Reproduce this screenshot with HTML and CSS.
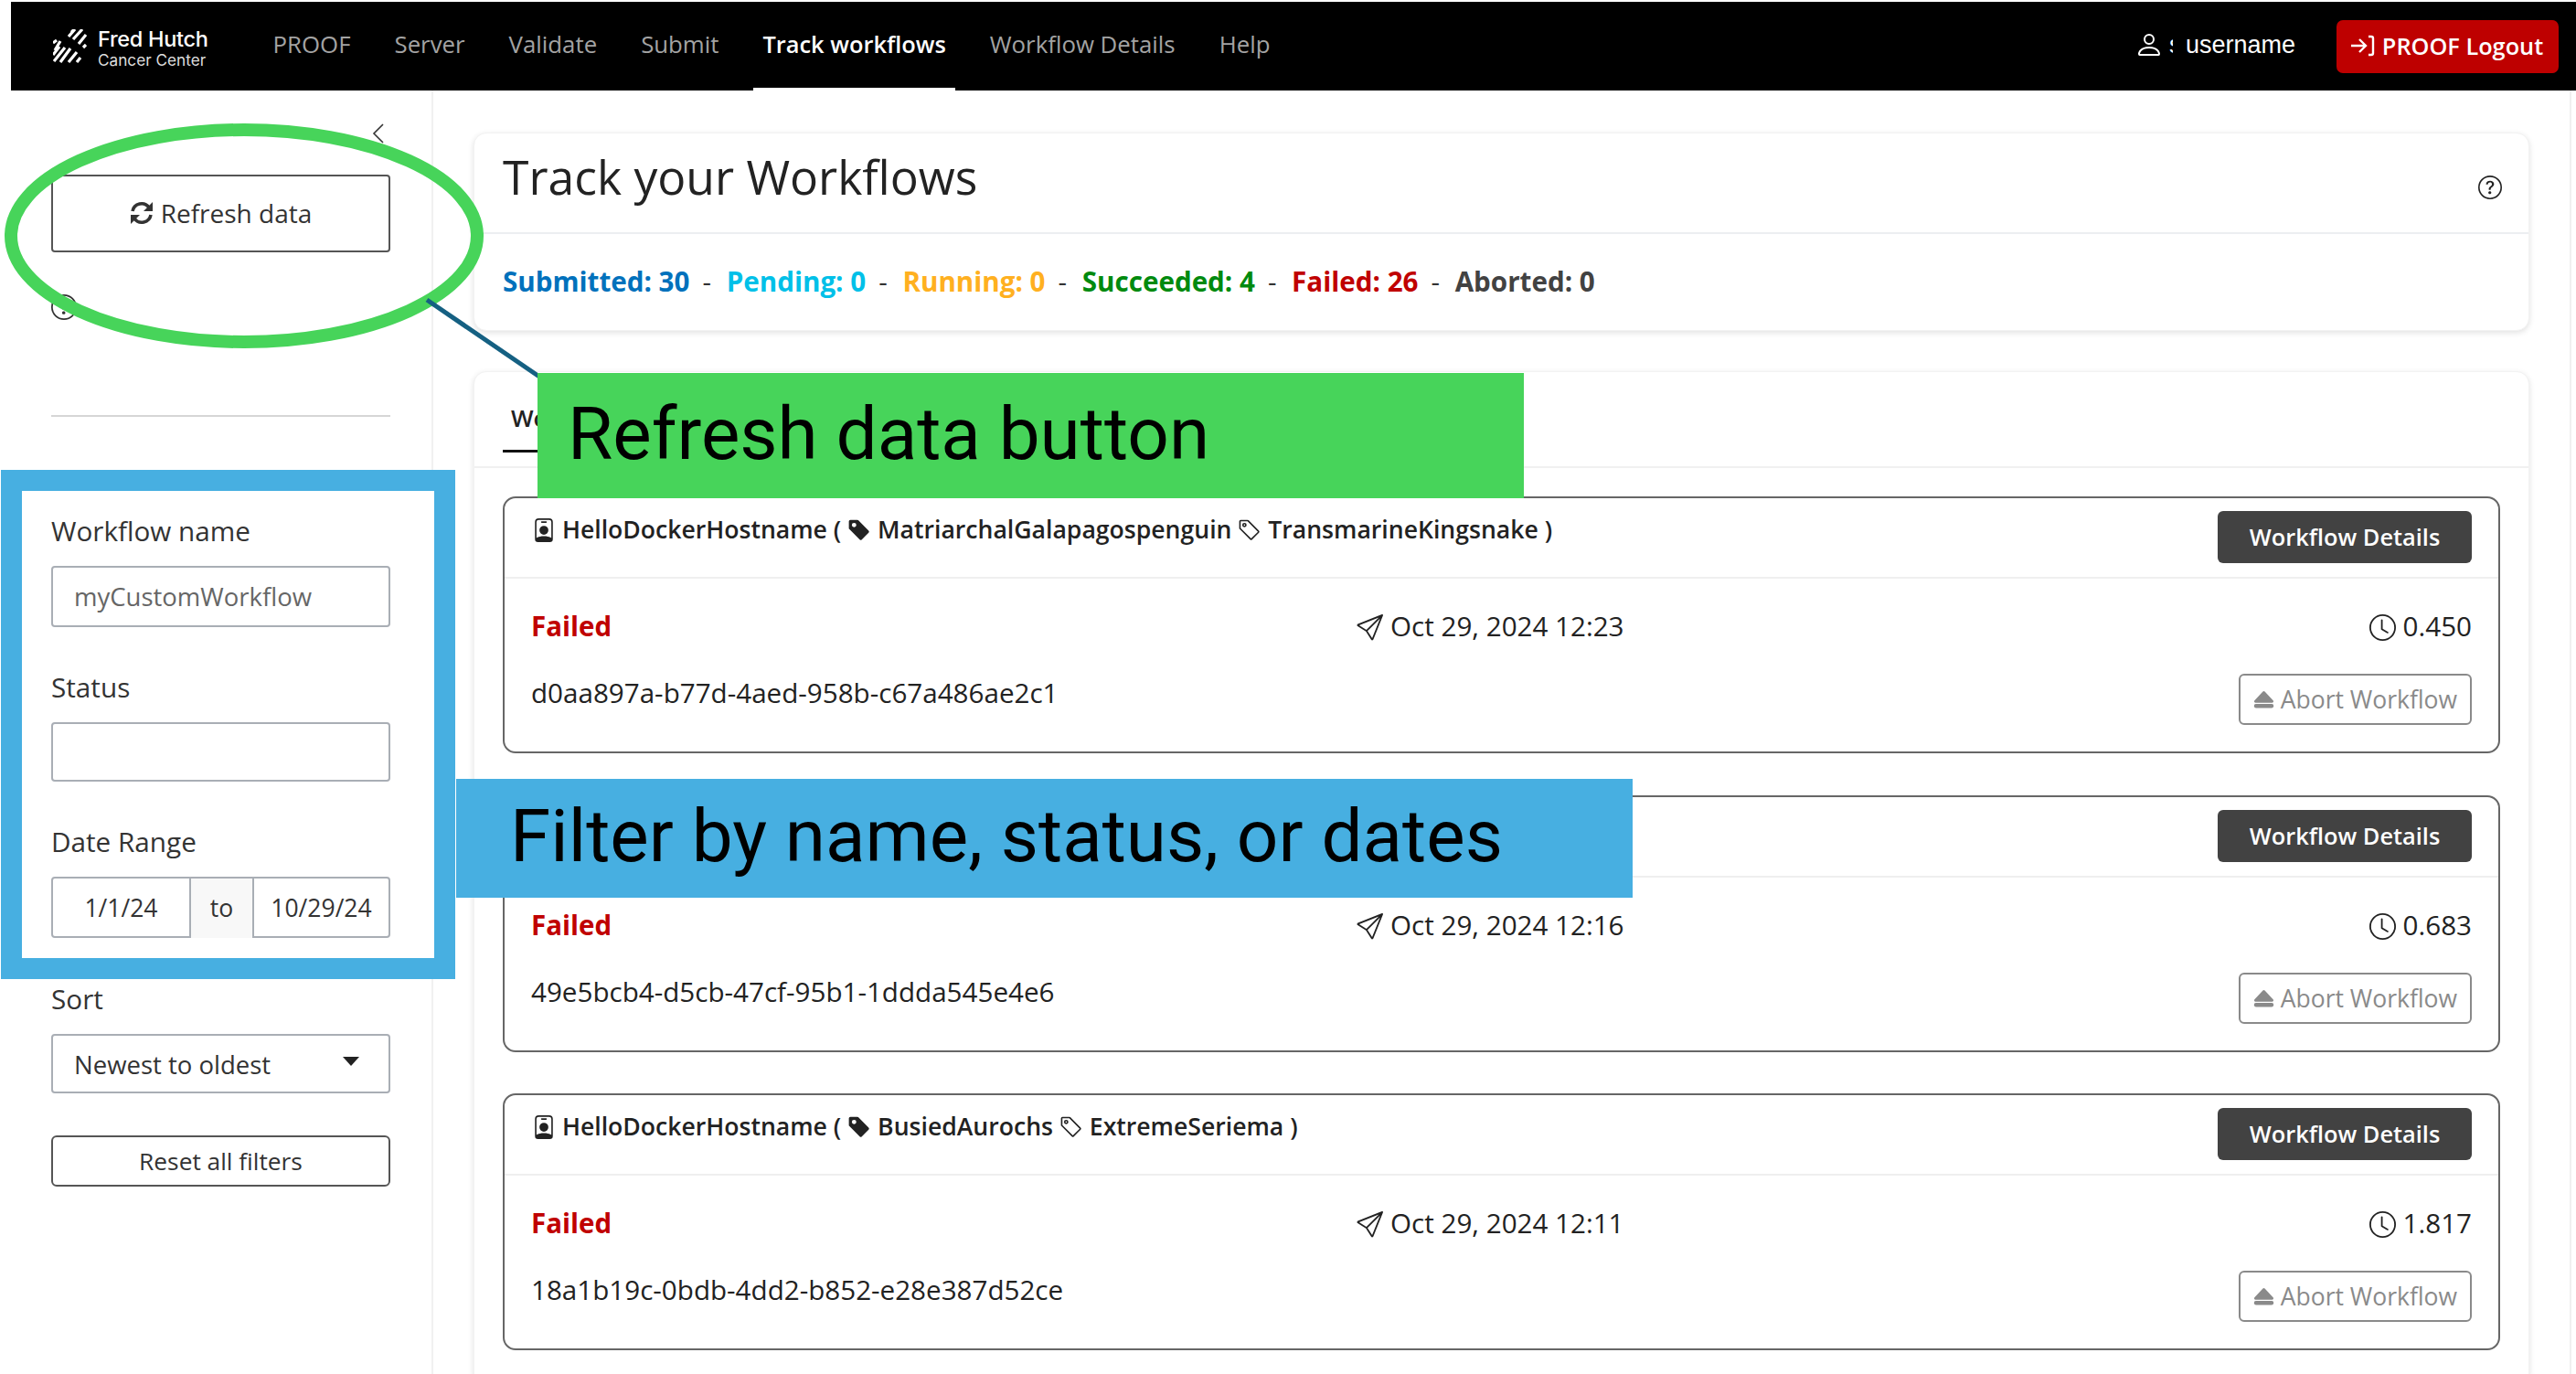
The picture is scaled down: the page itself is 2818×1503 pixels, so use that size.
FILE: index.html
```html
<!DOCTYPE html>
<html lang="en">
<head>
    <meta charset="UTF-8">
    <title>Track your Workflows</title>
    <link rel="stylesheet" href="styles.css">
</head>
<body>

    <!-- Shared icons -->
    <svg class="defs" aria-hidden="true">
        <symbol id="i-badge" viewBox="0 0 16 16"><path d="M6.5 2a.5.5 0 0 0 0 1h3a.5.5 0 0 0 0-1zM11 8a3 3 0 1 1-6 0 3 3 0 0 1 6 0"/><path d="M4.5 0A2.5 2.5 0 0 0 2 2.5V14a2 2 0 0 0 2 2h8a2 2 0 0 0 2-2V2.5A2.5 2.5 0 0 0 11.5 0zM3 2.5A1.5 1.5 0 0 1 4.5 1h7A1.5 1.5 0 0 1 13 2.5v10.795a4.2 4.2 0 0 0-.776-.492C11.392 12.387 10.063 12 8 12s-3.392.387-4.224.803a4.2 4.2 0 0 0-.776.492z"/></symbol>
        <symbol id="i-tag-fill" viewBox="0 0 16 16"><path d="M2 1a1 1 0 0 0-1 1v4.586a1 1 0 0 0 .293.707l7 7a1 1 0 0 0 1.414 0l4.586-4.586a1 1 0 0 0 0-1.414l-7-7A1 1 0 0 0 6.586 1zm4 3.5a1.5 1.5 0 1 1-3 0 1.5 1.5 0 0 1 3 0"/></symbol>
        <symbol id="i-tag" viewBox="0 0 16 16"><path d="M6 4.5a1.5 1.5 0 1 1-3 0 1.5 1.5 0 0 1 3 0m-1 0a.5.5 0 1 0-1 0 .5.5 0 0 0 1 0"/><path d="M2 1h4.586a1 1 0 0 1 .707.293l7 7a1 1 0 0 1 0 1.414l-4.586 4.586a1 1 0 0 1-1.414 0l-7-7A1 1 0 0 1 1 6.586V2a1 1 0 0 1 1-1m0 5.586 7 7L13.586 9l-7-7H2z"/></symbol>
        <symbol id="i-send" viewBox="0 0 16 16"><path d="M15.854.146a.5.5 0 0 1 .11.54l-5.819 14.547a.75.75 0 0 1-1.329.124l-3.178-4.995L.643 7.184a.75.75 0 0 1 .124-1.33L15.314.037a.5.5 0 0 1 .54.11ZM6.636 10.07l2.761 4.338L14.13 2.576zm6.787-8.201L1.591 6.602l4.339 2.76z"/></symbol>
        <symbol id="i-clock" viewBox="0 0 16 16"><path d="M8 3.5a.5.5 0 0 0-1 0V9a.5.5 0 0 0 .252.434l3.5 2a.5.5 0 0 0 .496-.868L8 8.71z"/><path d="M8 16A8 8 0 1 0 8 0a8 8 0 0 0 0 16m7-8A7 7 0 1 1 1 8a7 7 0 0 1 14 0"/></symbol>
        <symbol id="i-eject" viewBox="0 0 16 16"><path d="M7.27 1.047a1 1 0 0 1 1.46 0l6.345 6.77c.6.638.146 1.683-.73 1.683H1.656C.78 9.5.326 8.455.926 7.816zM.5 12a1.5 1.5 0 0 1 1.5-1.5h12a1.5 1.5 0 0 1 0 3H2A1.5 1.5 0 0 1 .5 12"/></symbol>
        <symbol id="i-help" viewBox="0 0 16 16"><path d="M8 15A7 7 0 1 1 8 1a7 7 0 0 1 0 14m0 1A8 8 0 1 0 8 0a8 8 0 0 0 0 16"/><path d="M5.255 5.786a.237.237 0 0 0 .241.247h.825c.138 0 .248-.113.266-.25.09-.656.54-1.134 1.342-1.134.686 0 1.314.343 1.314 1.168 0 .635-.374.927-.965 1.371-.673.489-1.206 1.06-1.168 1.987l.003.217a.25.25 0 0 0 .25.246h.811a.25.25 0 0 0 .25-.25v-.105c0-.718.273-.927 1.01-1.486.609-.463 1.244-.977 1.244-2.056 0-1.511-1.276-2.241-2.673-2.241-1.267 0-2.655.59-2.75 2.286m1.557 5.763c0 .533.425.927 1.01.927.609 0 1.028-.394 1.028-.927 0-.552-.42-.94-1.029-.94-.584 0-1.009.388-1.009.94"/></symbol>
    </svg>

    <!-- Top navigation -->
    <nav class="navbar">
        <div class="brand">
            <svg class="brand-mark" viewBox="0 0 37 37" fill="none" stroke="#fff" stroke-width="3.2">
                <path d="M0 15 L4 12M2 23 L8 13M20 1 L22 3M17 8 L24 0M22 11 L32 0M28 16 L36 6M33 20 L36 17"/>
                <path d="M0 28 L7 19M1 35 L13 20M8 36 L19 21M17 36 L26 25M26 36 L30 31"/>
            </svg>
            <div class="brand-text">
                <div class="brand-name">Fred Hutch</div>
                <div class="brand-sub">Cancer Center</div>
            </div>
        </div>
        <ul class="nav-links">
            <li><a>PROOF</a></li>
            <li><a>Server</a></li>
            <li><a>Validate</a></li>
            <li><a>Submit</a></li>
            <li><a class="active">Track workflows</a></li>
            <li><a>Workflow Details</a></li>
            <li><a>Help</a></li>
        </ul>
        <div class="nav-user">
            <svg class="icon user-icon" viewBox="0 0 16 16"><path d="M8 8a3 3 0 1 0 0-6 3 3 0 0 0 0 6m2-3a2 2 0 1 1-4 0 2 2 0 0 1 4 0m4 8c0 1-1 1-1 1H3s-1 0-1-1 1-4 6-4 6 3 6 4m-1-.004c-.001-.246-.154-.986-.832-1.664C11.516 10.68 10.289 10 8 10s-3.516.68-4.168 1.332c-.678.678-.83 1.418-.832 1.664z"/></svg>
            <span class="user-clip">s</span>
            <span class="username">username</span>
        </div>
        <button class="btn-logout">
            <svg class="logout-icon" viewBox="0 0 27 24" fill="none" stroke="#fff" stroke-width="2.4"><path d="M1 12H17M10 5l7 7-7 7M20 2h3q2 0 2 2v16q0 2-2 2h-3"/></svg>
            PROOF Logout
        </button>
    </nav>

    <div class="layout">

        <!-- Filters -->
        <aside class="sidebar">
            <div class="collapse-row">
                <svg class="chevron" viewBox="0 0 14 22" fill="none" stroke="#333" stroke-width="1.6"><path d="M12 1 2 11l10 10"/></svg>
            </div>
            <button class="btn-refresh">
                <svg class="refresh-icon" viewBox="0 0 26 26" fill="none" stroke="#333" stroke-width="3.6">
                    <path d="M3 11A10 10 0 0 1 21 7"/><path d="M23 15A10 10 0 0 1 5 19"/>
                    <path d="M25 1v10h-10z" fill="#333" stroke="none"/><path d="M1 25v-10h10z" fill="#333" stroke="none"/>
                </svg>
                Refresh data
            </button>
            <svg class="icon side-help"><use href="#i-help"/></svg>
            <hr class="side-rule">

            <div class="field field-first">
                <label>Workflow name</label>
                <div class="input placeholder">myCustomWorkflow</div>
            </div>
            <div class="field">
                <label>Status</label>
                <div class="input input-status"></div>
            </div>
            <div class="field field-date">
                <label>Date Range</label>
                <div class="date-range">
                    <span class="date-from">1/1/24</span>
                    <span class="date-to">to</span>
                    <span class="date-end">10/29/24</span>
                </div>
            </div>
            <div class="field field-sort">
                <label>Sort</label>
                <div class="input select">Newest to oldest<span class="caret"></span></div>
            </div>
            <button class="btn-reset">Reset all filters</button>
        </aside>

        <main class="main">
            <section class="panel">
                <div class="panel-head">
                    <h1>Track your Workflows</h1>
                    <svg class="icon head-help"><use href="#i-help"/></svg>
                </div>
                <div class="panel-stats">
                    <span class="s-submitted">Submitted: 30</span><span class="sep">-</span>
                    <span class="s-pending">Pending: 0</span><span class="sep">-</span>
                    <span class="s-running">Running: 0</span><span class="sep">-</span>
                    <span class="s-succeeded">Succeeded: 4</span><span class="sep">-</span>
                    <span class="s-failed">Failed: 26</span><span class="sep">-</span>
                    <span class="s-aborted">Aborted: 0</span>
                </div>
            </section>

            <section class="panel panel-list">
                <div class="tabs"><a class="tab">Workflows</a></div>
                <div class="cards">

                    <article class="wf-card">
                        <header class="wf-head">
                            <div class="wf-title"><svg class="icon"><use href="#i-badge"/></svg> HelloDockerHostname ( <svg class="icon"><use href="#i-tag-fill"/></svg> MatriarchalGalapagospenguin <svg class="icon"><use href="#i-tag"/></svg> TransmarineKingsnake )</div>
                            <button class="btn-details">Workflow Details</button>
                        </header>
                        <div class="wf-body">
                            <div class="wf-row">
                                <span class="wf-status">Failed</span>
                                <span><svg class="icon"><use href="#i-send"/></svg> Oct 29, 2024 12:23</span>
                                <span><svg class="icon"><use href="#i-clock"/></svg> 0.450</span>
                            </div>
                            <div class="wf-row wf-row-id">
                                <span class="wf-id">d0aa897a-b77d-4aed-958b-c67a486ae2c1</span>
                                <button class="btn-abort"><svg class="icon"><use href="#i-eject"/></svg> Abort Workflow</button>
                            </div>
                        </div>
                    </article>

                    <article class="wf-card">
                        <header class="wf-head">
                            <div class="wf-title"></div>
                            <button class="btn-details">Workflow Details</button>
                        </header>
                        <div class="wf-body">
                            <div class="wf-row">
                                <span class="wf-status">Failed</span>
                                <span><svg class="icon"><use href="#i-send"/></svg> Oct 29, 2024 12:16</span>
                                <span><svg class="icon"><use href="#i-clock"/></svg> 0.683</span>
                            </div>
                            <div class="wf-row wf-row-id">
                                <span class="wf-id">49e5bcb4-d5cb-47cf-95b1-1ddda545e4e6</span>
                                <button class="btn-abort"><svg class="icon"><use href="#i-eject"/></svg> Abort Workflow</button>
                            </div>
                        </div>
                    </article>

                    <article class="wf-card">
                        <header class="wf-head">
                            <div class="wf-title"><svg class="icon"><use href="#i-badge"/></svg> HelloDockerHostname ( <svg class="icon"><use href="#i-tag-fill"/></svg> BusiedAurochs <svg class="icon"><use href="#i-tag"/></svg> ExtremeSeriema )</div>
                            <button class="btn-details">Workflow Details</button>
                        </header>
                        <div class="wf-body">
                            <div class="wf-row">
                                <span class="wf-status">Failed</span>
                                <span><svg class="icon"><use href="#i-send"/></svg> Oct 29, 2024 12:11</span>
                                <span><svg class="icon"><use href="#i-clock"/></svg> 1.817</span>
                            </div>
                            <div class="wf-row wf-row-id">
                                <span class="wf-id">18a1b19c-0bdb-4dd2-b852-e28e387d52ce</span>
                                <button class="btn-abort"><svg class="icon"><use href="#i-eject"/></svg> Abort Workflow</button>
                            </div>
                        </div>
                    </article>

                </div>
            </section>
        </main>
    </div>

    <!-- Annotations drawn over the page -->
    <svg class="note-ring" viewBox="0 0 2818 1503" fill="none">
        <ellipse cx="267" cy="258" rx="255" ry="116" stroke="#47d45a" stroke-width="14"/>
        <path d="M467 328 590 412" stroke="#156082" stroke-width="5"/>
    </svg>
    <div class="note note-green">Refresh data button</div>
    <div class="note-frame"></div>
    <div class="note note-blue">Filter by name, status, or dates</div>

</body>
</html>
```

FILE: styles.css
```css
* {
    box-sizing: border-box;
}
html, body {
    height: 1503px;
    overflow: hidden;
}
body {
    margin: 0;
    padding: 2px 0 0 12px;
    position: relative;
    background-color: white;
    font-family: "Open Sans", Arial, sans-serif;
    font-size: 29.7px;
    color: #222;
}
button {
    font-family: inherit;
    cursor: pointer;
}
.defs {
    display: none;
}
.icon {
    width: 26px;
    height: 26px;
    fill: currentColor;
    vertical-align: -4px;
}

/* Navbar */
.navbar {
    height: 97px;
    background-color: black;
    display: flex;
    align-items: center;
    color: white;
}
.brand {
    display: flex;
    align-items: center;
    gap: 12px;
    margin-left: 46px;
}
.brand-mark {
    width: 37px;
    height: 37px;
}
.brand-text {
    font-family: Inter, "Liberation Sans", sans-serif;
    line-height: 1;
    margin-top: 4px;
}
.brand-name {
    font-size: 23.5px;
    font-weight: 500;
    letter-spacing: -0.3px;
}
.brand-sub {
    font-size: 17.2px;
    margin-top: 2px;
    color: #ddd;
}
.nav-links {
    list-style: none;
    display: flex;
    gap: 28px;
    margin: 0 0 0 61px;
    padding: 0;
    height: 100%;
}
.nav-links a {
    display: flex;
    align-items: center;
    height: 100%;
    padding: 0 10px 5px 10px;
    color: #a3a3a3;
    font-size: 25.8px;
}
.nav-links a.active {
    color: white;
    font-size: 25.4px;
    font-weight: 600;
    border-bottom: 3px solid white;
    padding-bottom: 2px;
}
.nav-user {
    margin-left: auto;
    display: flex;
    align-items: center;
    padding-bottom: 3px;
    color: white;
}
.user-icon {
    width: 32px;
    height: 32px;
}
.user-clip {
    width: 4px;
    margin-left: 6px;
    overflow: hidden;
    font-family: "Liberation Sans", Arial, sans-serif;
    font-size: 27px;
}
.username {
    margin-left: 14px;
    font-family: "Liberation Sans", Arial, sans-serif;
    font-size: 27px;
}
.btn-logout {
    margin: 0 19px 0 45px;
    width: 243px;
    height: 58px;
    padding: 0 2px 2px 0;
    background-color: #be0000;
    border: none;
    border-radius: 7px;
    color: white;
    font-size: 25.3px;
    font-weight: 600;
    display: flex;
    align-items: center;
    justify-content: center;
    gap: 8px;
}
.logout-icon {
    width: 27px;
    height: 24px;
}

.layout {
    display: flex;
    height: 1404px;
}

/* Sidebar */
.sidebar {
    width: 462px;
    flex: none;
    padding: 36px 45px 0 44px;
    border-right: 2px solid #f1f1f1;
}
.collapse-row {
    display: flex;
    justify-content: flex-end;
    padding-right: 6px;
    height: 22px;
}
.chevron {
    width: 14px;
    height: 22px;
}
.btn-refresh {
    margin: 34px 0 0 0;
    width: 100%;
    height: 85px;
    padding-bottom: 3px;
    background-color: white;
    border: 2px solid #555;
    border-radius: 4px;
    font-size: 28px;
    color: #333;
    display: flex;
    align-items: center;
    justify-content: center;
    gap: 8px;
}
.refresh-icon {
    width: 26px;
    height: 26px;
}
.side-help {
    display: block;
    margin-top: 46px;
    color: #333;
    width: 28px;
    height: 28px;
}
.side-rule {
    margin: 104px 0 0 0;
    border: none;
    border-top: 2px solid #d6d6d6;
}
.field {
    margin-bottom: 46px;
}
.field-first {
    margin-top: 105px;
}
.field-date {
    margin-bottom: 47px;
}
.field-sort {
    margin-bottom: 46px;
}
.field label {
    display: block;
    height: 40px;
    line-height: 40px;
    margin-bottom: 18px;
    color: #333;
}
.input {
    height: 67px;
    line-height: 63px;
    border: 2px solid #a9aeb5;
    border-radius: 4px;
    padding: 0 23px;
    font-size: 27.5px;
    color: #333;
    background-color: white;
}
.placeholder {
    color: #666;
}
.input-status {
    height: 65px;
}
.date-range {
    height: 67px;
    display: grid;
    grid-template-columns: 149px 71px 1fr;
    border: 2px solid #a9aeb5;
    border-radius: 4px;
    font-size: 26.5px;
    color: #333;
    text-align: center;
    line-height: 65px;
}
.date-to {
    background-color: #f8f8f8;
    border-left: 2px solid #a9aeb5;
    border-right: 2px solid #a9aeb5;
}
.select {
    position: relative;
    height: 65px;
    line-height: 63px;
}
.caret {
    position: absolute;
    right: 32px;
    top: 23px;
    border-left: 9px solid transparent;
    border-right: 9px solid transparent;
    border-top: 10px solid #222;
}
.btn-reset {
    width: 100%;
    height: 56px;
    background-color: white;
    border: 2px solid #555;
    border-radius: 6px;
    font-size: 26.3px;
    color: #333;
}

/* Main column */
.main {
    width: 2339px;
    flex: none;
    padding: 46px 44px 0 44px;
    border-right: 2px solid #f0f0f0;
}
.panel {
    background-color: white;
    border-radius: 14px;
    border: 1px solid #f2f2f2;
    box-shadow: 0 2px 6px rgba(0, 0, 0, 0.12);
    height: 217px;
}
.panel-head {
    height: 110px;
    padding: 0 29px 0 31px;
    border-bottom: 2px solid #eceef1;
    display: flex;
    align-items: center;
    justify-content: space-between;
}
h1 {
    margin: -14px 0 0 0;
    font-size: 51.6px;
    font-weight: 400;
    color: #222;
}
.head-help {
    margin-top: 10px;
}
.panel-stats {
    padding: 32px 31px 0 31px;
    font-weight: 700;
    font-size: 29.6px;
    line-height: 40px;
}
.sep {
    margin: 0 9px 0 14px;
    color: #333;
    font-weight: 400;
}
.s-submitted { color: #0071bc; }
.s-pending { color: #00c0e8; }
.s-running { color: #ffb020; }
.s-succeeded { color: #008a0e; }
.s-failed { color: #c00000; }
.s-aborted { color: #424242; }

.panel-list {
    margin-top: 44px;
    height: 1100px;
    border-radius: 14px 14px 0 0;
}
.tabs {
    height: 105px;
    padding: 0 31px;
    border-bottom: 2px solid #f0f0f0;
}
.tab {
    display: inline-block;
    height: 88px;
    line-height: 100px;
    padding: 0 9px;
    border-bottom: 3px solid #111;
    font-size: 26px;
    font-weight: 600;
    color: #222;
}
.cards {
    padding: 31px 31px 0 31px;
    display: flex;
    flex-direction: column;
    gap: 45.5px;
}

/* One workflow */
.wf-card {
    height: 281px;
    border: 2px solid #666;
    border-radius: 14px;
}
.wf-head {
    height: 88px;
    padding: 14px 29px 0 29px;
    display: flex;
    justify-content: space-between;
    align-items: flex-start;
    border-bottom: 2px solid #efefef;
}
.wf-title {
    font-size: 26.6px;
    font-weight: 600;
    line-height: 40px;
    color: #222;
    padding-left: 1px;
}
.btn-details {
    width: 278px;
    height: 57px;
    padding-bottom: 2px;
    background-color: #424242;
    border: none;
    border-radius: 6px;
    color: white;
    font-size: 25.4px;
    font-weight: 600;
}
.wf-body {
    padding: 32px 29px 0 29px;
}
.wf-row {
    display: flex;
    justify-content: space-between;
    line-height: 40px;
    font-size: 29.6px;
    color: #222;
}
.wf-row .icon {
    width: 29px;
    height: 29px;
    vertical-align: -5px;
}
.wf-row-id {
    margin-top: 32px;
}
.wf-status {
    font-weight: 700;
    font-size: 29.5px;
    color: #c00000;
}
.wf-id {
    margin-top: 1px;
}
.btn-abort {
    width: 255px;
    height: 56px;
    background-color: white;
    border: 2px solid #8a8a8a;
    border-radius: 6px;
    color: #8a8a8a;
    font-size: 26.5px;
    padding: 0;
}
.wf-row .btn-abort .icon {
    width: 23px;
    height: 23px;
    vertical-align: -3px;
}

/* Annotations */
.note-ring {
    position: absolute;
    left: 0;
    top: 0;
    width: 2818px;
    height: 1503px;
}
.note {
    position: absolute;
    display: flex;
    align-items: center;
    padding-bottom: 4px;
    font-family: Roboto, Arial, sans-serif;
    font-size: 80px;
    color: black;
}
.note-green {
    left: 588px;
    top: 408px;
    width: 1079px;
    height: 137px;
    padding-left: 33px;
    background-color: #47d45a;
}
.note-blue {
    left: 499px;
    top: 852px;
    width: 1287px;
    height: 130px;
    padding-left: 59px;
    background-color: #47afe1;
}
.note-frame {
    position: absolute;
    left: 1px;
    top: 514px;
    width: 497px;
    height: 557px;
    border: 23px solid #47afe1;
    box-shadow: inset -3px 0 0 white;
}
```
